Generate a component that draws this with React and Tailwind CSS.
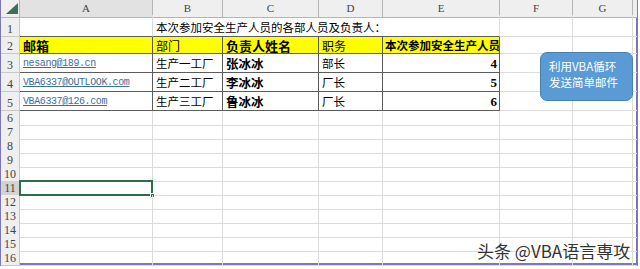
const GRID = 'grid grid-cols-[19px_133px_70px_96px_64px_117px_73px_60px_4px]'
const CN = "font-['Noto_Sans_CJK_SC',sans-serif]"
const SERIF = "font-['Liberation_Serif','Noto_Sans_CJK_SC',serif]"
const MONO = "font-['Liberation_Mono',monospace]"

const LETTERS = ['A', 'B', 'C', 'D', 'E', 'F', 'G']

const people = [
  { row: 3, mail: 'nesang@189.cn', dept: '生产一工厂', name: '张冰冰', title: '部长', n: 4 },
  { row: 4, mail: 'VBA6337@OUTLOOK.com', dept: '生产二工厂', name: '李冰冰', title: '厂长', n: 5 },
  { row: 5, mail: 'VBA6337@126.com', dept: '生产三工厂', name: '鲁冰冰', title: '厂长', n: 6 },
]

function RowHead({ n, active }) {
  return (
    <div
      className={`flex items-end justify-center border-r border-b border-[#c8c8c8] text-[12px] leading-[14px] text-[#444] ${SERIF} ${
        active ? 'bg-[#d3d3d3]' : 'bg-[#efefef]'
      }`}
    >
      {n}
    </div>
  )
}

function Cell({ className = '', children }) {
  return (
    <div className={`flex items-end overflow-hidden whitespace-nowrap border-r border-b ${className}`}>
      {children}
    </div>
  )
}

function EmptyRow({ n, active }) {
  return (
    <div className={`${GRID} h-[14px]`}>
      <RowHead n={n} active={active} />
      <div className="relative border-r border-b border-[#dcdcdc]">
        {active && (
          <div className="absolute -left-[1px] -top-[1px] -right-[1px] -bottom-[1px] border-2 border-[#2b6e4a]">
            <div className="absolute -right-[4px] -bottom-[4px] h-[5px] w-[5px] border border-white bg-[#2b6e4a]" />
          </div>
        )}
      </div>
      {LETTERS.slice(1).map((l) => (
        <div key={l} className="border-r border-b border-[#dcdcdc]" />
      ))}
      <div className="border-b border-[#dcdcdc]" />
    </div>
  )
}

export default function App() {
  const dark = 'border-[#5c5c5c]'
  const light = 'border-[#dcdcdc]'

  return (
    <div className="relative h-[269px] w-[640px] overflow-hidden bg-white">
      <div className="h-[266px] w-[638px] border-l border-r-2 border-b-[3px] border-[#7d78b4]">
        {/* column headers */}
        <div className={`${GRID} h-[15px]`}>
          <div className="relative border-r border-b border-[#b5b5b5] bg-[#efefef]">
            <svg className="absolute left-[5px] top-[3px]" width="12" height="11" viewBox="0 0 12 11">
              <polygon points="12,0 12,11 0,11" fill="#3d6f56" />
            </svg>
          </div>
          {LETTERS.map((l) => (
            <div
              key={l}
              className={`flex items-center justify-center border-r border-b border-[#b5b5b5] text-[11px] text-[#444] ${SERIF} ${
                l === 'A' ? 'bg-[#e2e2e2]' : 'bg-[#efefef]'
              }`}
            >
              {l}
            </div>
          ))}
          <div className="border-b border-[#b5b5b5] bg-[#efefef]" />
        </div>

        {/* row 1 */}
        <div className={`${GRID} h-[22px]`}>
          <RowHead n={1} />
          <Cell className={`${light} border-b-[#5c5c5c]`} />
          <div className={`col-span-4 flex items-end border-r border-b ${light} border-b-[#5c5c5c] pb-[1px] pl-[3px] text-[11.5px] leading-[16px] text-black ${CN}`}>
            本次参加安全生产人员的各部人员及负责人：
          </div>
          <Cell className={light} />
          <Cell className={light} />
          <div className={`border-b ${light}`} />
        </div>

        {/* row 2 header */}
        <div className={`${GRID} h-[17px]`}>
          <RowHead n={2} />
          <Cell className={`${dark} bg-[#ffff00] pl-[3px] text-[13px] font-bold leading-[15px] ${CN}`}>邮箱</Cell>
          <Cell className={`${dark} bg-[#ffff00] pl-[3px] text-[12px] leading-[15px] ${CN}`}>部门</Cell>
          <Cell className={`${dark} bg-[#ffff00] pl-[3px] text-[13px] font-bold leading-[15px] ${CN}`}>负责人姓名</Cell>
          <Cell className={`${dark} bg-[#ffff00] pl-[3px] text-[12px] leading-[15px] ${CN}`}>职务</Cell>
          <Cell className={`${dark} bg-[#ffff00] pl-[2px] text-[11.5px] font-bold leading-[15px] ${CN}`}>本次参加安全生产人员</Cell>
          <Cell className={light} />
          <Cell className={light} />
          <div className={`border-b ${light}`} />
        </div>

        {/* data rows */}
        {people.map((p) => (
          <div key={p.row} className={`${GRID} h-[19px]`}>
            <RowHead n={p.row} />
            <Cell className={`${dark} pb-[2px] pl-[3px] text-[10px] tracking-[-0.4px] leading-[13px] text-[#3d6f9e] underline ${MONO}`}>{p.mail}</Cell>
            <Cell className={`${dark} pb-[1px] pl-[3px] text-[11.5px] leading-[15px] ${CN}`}>{p.dept}</Cell>
            <Cell className={`${dark} pb-[1px] pl-[3px] text-[12.5px] font-bold leading-[15px] ${CN}`}>{p.name}</Cell>
            <Cell className={`${dark} pb-[1px] pl-[3px] text-[11.5px] leading-[15px] ${CN}`}>{p.title}</Cell>
            <Cell className={`${dark} justify-end pb-[1px] pr-[2px] text-[13px] font-bold leading-[15px] ${SERIF}`}>{p.n}</Cell>
            <Cell className={light} />
            <Cell className={light} />
            <div className={`border-b ${light}`} />
          </div>
        ))}

        {[6, 7, 8, 9, 10, 11, 12, 13, 14, 15, 16].map((n) => (
          <EmptyRow key={n} n={n} active={n === 11} />
        ))}
      </div>

      {/* callout shape */}
      <div className={`absolute left-[540px] top-[52px] h-[49px] w-[93px] rounded-[7px] border border-[#4a7fb0] bg-[#5b9bd5] pl-[8px] pt-[5px] text-[11.5px] leading-[16px] text-white ${CN}`}>
        <div>利用VBA循环</div>
        <div>发送简单邮件</div>
      </div>

      {/* watermark */}
      <div
        className={`absolute left-[477px] top-[241px] text-[17px] leading-[20px] text-[#333] ${CN} [text-shadow:0_0_2px_#fff,0_0_2px_#fff]`}
      >
        头条 @VBA语言専攻
      </div>
    </div>
  )
}
